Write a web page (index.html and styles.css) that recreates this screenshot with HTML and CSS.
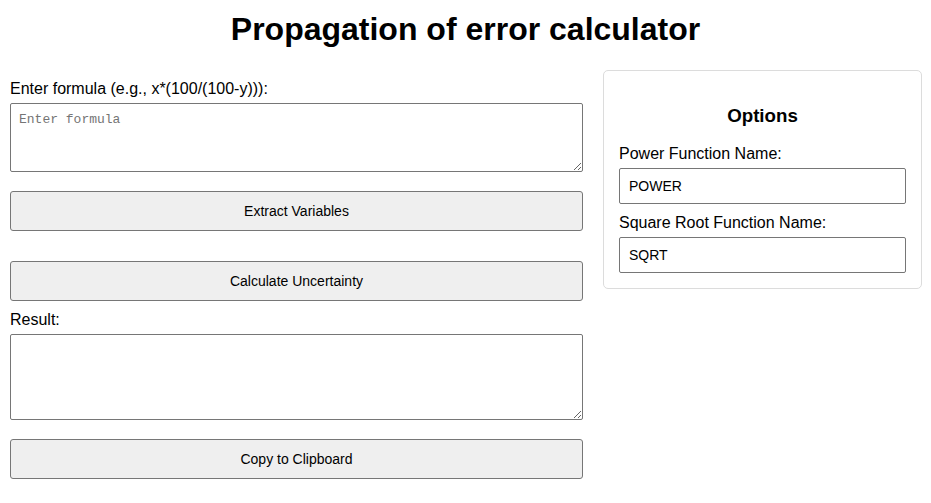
FILE: index.html
```html
<!DOCTYPE html>
<html lang="en">
<head>
<meta charset="utf-8">
<title>Propagation of error calculator</title>
<link rel="stylesheet" href="styles.css">
</head>
<body>
<h1 class="title">Propagation of error calculator</h1>
<div class="layout">
  <div class="main">
    <label class="field-label" for="formula">Enter formula (e.g., x*(100/(100-y))):</label>
    <textarea id="formula" class="area area-formula" placeholder="Enter formula"></textarea>
    <button class="btn btn-extract">Extract Variables</button>
    <div class="variables"></div>
    <button class="btn btn-calc">Calculate Uncertainty</button>
    <label class="field-label" for="result">Result:</label>
    <textarea id="result" class="area area-result"></textarea>
    <button class="btn">Copy to Clipboard</button>
  </div>
  <aside class="options">
    <h3 class="options-title">Options</h3>
    <label class="field-label" for="pow">Power Function Name:</label>
    <input id="pow" class="text-input" type="text" value="POWER">
    <label class="field-label" for="sqrt">Square Root Function Name:</label>
    <input id="sqrt" class="text-input last" type="text" value="SQRT">
  </aside>
</div>
</body>
</html>
```
FILE: styles.css
```css
* { box-sizing: border-box; }
html, body { margin: 0; padding: 0; background: #fff; }
body {
  font-family: "Liberation Sans", Arial, sans-serif;
  color: #000;
  font-size: 16px;
}
.title {
  font-size: 32px;
  font-weight: bold;
  text-align: center;
  margin: 11px 0 22px;
  line-height: normal;
}
.layout {
  display: flex;
  align-items: flex-start;
  gap: 20px;
  padding: 0 9px 0 10px;
}
.main {
  flex: 1;
  min-width: 0;
  display: flex;
  flex-direction: column;
  padding-top: 10px;
}
.field-label {
  display: block;
  font-size: 16px;
  line-height: normal;
  margin-bottom: 5px;
}
.area {
  display: block;
  width: 100%;
  border: 1px solid #767676;
  border-radius: 2px;
  padding: 8px;
  font-family: "Liberation Mono", "Courier New", monospace;
  font-size: 13px;
  color: #000;
  background: #fff;
  margin: 0 0 19px;
}
.area::placeholder { color: #757575; }
.area-formula { height: 69px; }
.area-result { height: 86px; }
.btn {
  display: block;
  width: 100%;
  height: 40px;
  background: #efefef;
  border: 1px solid #767676;
  border-radius: 3px;
  font-family: "Liberation Sans", Arial, sans-serif;
  font-size: 14px;
  color: #000;
  padding: 0;
  margin: 0;
}
.variables { height: 30px; }
.btn-calc { margin-bottom: 10px; }
.options {
  width: 319px;
  flex-shrink: 0;
  border: 1px solid #dcdcdc;
  border-radius: 5px;
  padding: 15px;
}
.options-title {
  font-size: 18.72px;
  font-weight: bold;
  text-align: center;
  margin: 19px 0 18px;
  line-height: normal;
}
.text-input {
  display: block;
  width: 100%;
  height: 36px;
  border: 1px solid #767676;
  border-radius: 2px;
  padding: 0 9px;
  font-family: "Liberation Sans", Arial, sans-serif;
  font-size: 14px;
  color: #000;
  margin: 0 0 10px;
}
.text-input.last { margin-bottom: 0; }
```
